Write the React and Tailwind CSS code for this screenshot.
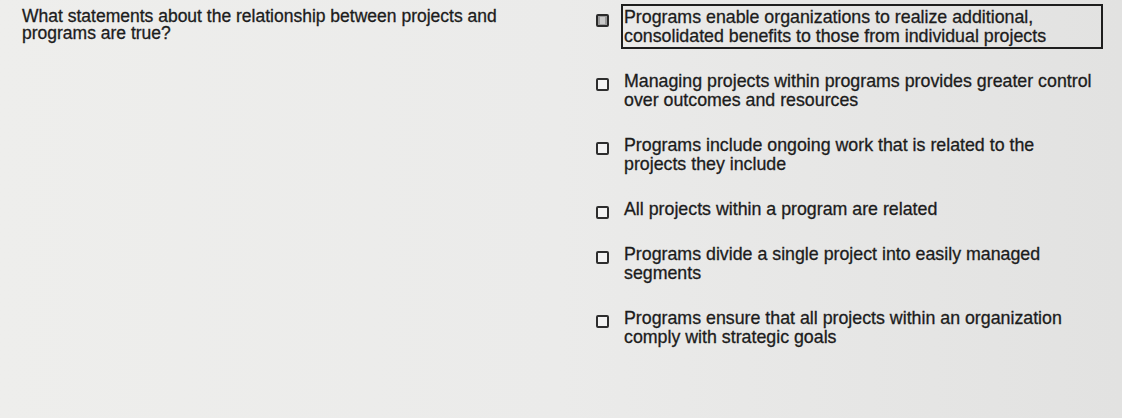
import React from "react";

const options = [
  "Programs enable organizations to realize additional, consolidated benefits to those from individual projects",
  "Managing projects within programs provides greater control over outcomes and resources",
  "Programs include ongoing work that is related to the projects they include",
  "All projects within a program are related",
  "Programs divide a single project into easily managed segments",
  "Programs ensure that all projects within an organization comply with strategic goals",
];

function Box({ active }) {
  if (active) {
    return (
      <div className="mt-[10px] w-[13px] h-[13px] shrink-0 border-2 border-[#2a2a2a] rounded-[2px] bg-[#9a9a9a] flex items-center justify-center">
        <div className="w-[5px] h-[7px] bg-[#c9c9c9]" />
      </div>
    );
  }
  return (
    <div className="mt-[10px] w-[13px] h-[13px] shrink-0 border-2 border-[#2e2e2e] rounded-[2px] bg-[#f3f3f3]" />
  );
}

export default function App() {
  return (
    <div className="w-[1122px] h-[418px] overflow-hidden flex bg-gradient-to-r from-[#eeeeec] via-[#ebebea] to-[#e2e2e1] font-['Liberation_Sans',Arial,sans-serif] text-[#1c1c1c] [-webkit-text-stroke:0.3px_#1c1c1c]">
      <div className="w-[596px] shrink-0 pl-[22px] pt-[8px]">
        <p className="text-[17.5px] leading-[17px] w-[500px]">
          What statements about the relationship between projects and programs are true?
        </p>
      </div>
      <div className="flex flex-col gap-[19px] pt-[4px]">
        {options.map((t, i) => (
          <div key={i} className="flex items-start gap-[12px]">
            <Box active={i === 0} />
            <div
              className={
                "w-[482px] border-2 px-[1px] pt-[2px] pb-[1px] text-[17.8px] leading-[19px] " +
                (i === 0 ? "border-[#1e1e1e]" : "border-transparent")
              }
            >
              {t}
            </div>
          </div>
        ))}
      </div>
    </div>
  );
}
